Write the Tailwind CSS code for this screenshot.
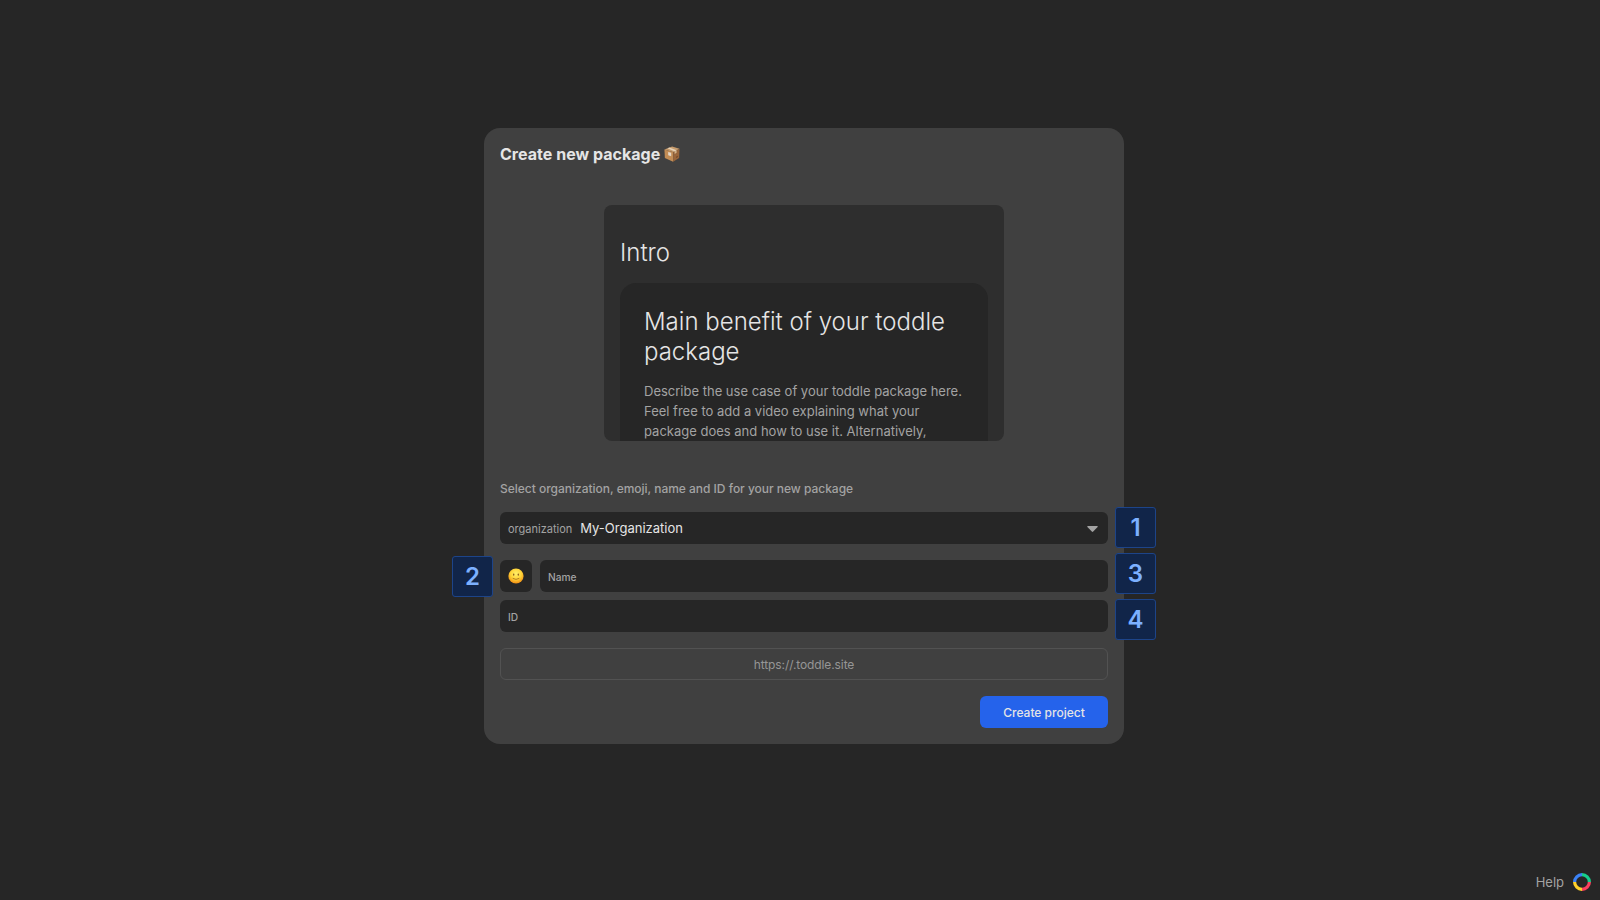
<!DOCTYPE html>
<html lang="en">
<head>
<meta charset="utf-8">
<title>Create new package</title>
<script src="https://cdn.jsdelivr.net/npm/@tailwindcss/browser@4"></script>
</head>
<body class="relative h-[900px] w-[1600px] overflow-hidden bg-[#262626] pt-32 pl-[484px] font-['Inter',sans-serif] text-neutral-200 antialiased">
<main class="flex h-[616px] w-[640px] flex-col rounded-2xl bg-[#404040] px-4">
  <h1 class="mt-4 flex h-5 items-center gap-1 text-base font-bold tracking-[0.03px] whitespace-nowrap text-[#e5e5e5]"><span>Create new package</span>
    <svg class="mt-[-1px] size-4" viewBox="0 0 16 16">
      <path d="M.4 3.5 8.1.4l7.4 2.3-6.1 3.6z" fill="#c59a6c"/>
      <path d="M.4 3.5l9 2.8-.3 9.4L.9 11.9z" fill="#c18c55"/>
      <path d="M9.4 6.3l6.1-3.6-.4 9.3-6 3.7z" fill="#98653b"/>
      <path d="M3.5 2.3l1.8-.8 7.3 2.7-2 1.2z" fill="#e5d2b7"/>
      <path d="M10.6 5.4l2-1.2v2.6l-2 1.2z" fill="#d2b38c"/>
      <path d="M4.2 5.9l3 .9v3.5l-3-1.1z" fill="#e4d8c9"/>
      <path d="M12.2 10.7l1.5-.9v1.3l-1.5.9z" fill="#6e4325"/>
    </svg>
  </h1>
  <section class="mt-[41px] h-[236px] w-[400px] self-center overflow-hidden rounded-lg bg-[#2e2e2e] px-4 pt-[33px]">
    <h2 class="text-2xl leading-[30px] font-light text-[#e5e5e5]">Intro</h2>
    <div class="mt-[15px] h-60 rounded-t-2xl bg-[#262626] px-6 pt-6">
      <h3 class="text-2xl leading-[30px] font-light text-[#e5e5e5]">Main benefit of your toddle<br>package</h3>
      <p class="mt-[14px] text-[13px] leading-5 whitespace-nowrap text-[#a3a3a3]">Describe the use case of your toddle package here.<br>Feel free to add a video explaining what your<br>package does and how to use it. Alternatively,</p>
    </div>
  </section>
  <p class="mt-[38px] text-xs leading-5 font-medium tracking-[-0.02px] text-[#a3a3a3]">Select organization, emoji, name and ID for your new package</p>
  <div class="mt-[13px] flex h-8 items-center gap-2 rounded-md bg-[#262626] px-2">
    <span class="pt-[3px] text-[11px] text-[#a3a3a3]">organization</span>
    <span class="pt-[2px] text-[13px] text-[#e5e5e5]">My-Organization</span>
    <svg class="mt-px mr-[2.5px] ml-auto h-[6px] w-[11px]" viewBox="0 0 11 6"><path d="M.8 0h9.4q.9.2.4.9L6.2 5.6q-.7.6-1.4 0L.4.9Q0 .2.8 0z" fill="#a3a3a3"/></svg>
  </div>
  <div class="mt-4 flex h-8 gap-2">
    <div class="flex w-8 items-center justify-center rounded-md bg-[#262626]">
      <svg class="mt-[-1px] size-4" viewBox="0 0 16 16">
        <defs><radialGradient id="face" cx=".5" cy=".35" r=".65"><stop offset="0" stop-color="#fff06a"/><stop offset=".55" stop-color="#ffd337"/><stop offset="1" stop-color="#f08c13"/></radialGradient></defs>
        <circle cx="8" cy="8" r="7.6" fill="url(#face)"/>
        <ellipse cx="5.7" cy="6.6" rx=".65" ry="1.2" fill="#8a5a1c"/><ellipse cx="10.3" cy="6.6" rx=".65" ry="1.2" fill="#8a5a1c"/>
        <path d="M5 10.5q3 2 6 0" fill="none" stroke="#9c651c" stroke-width=".75" stroke-linecap="round"/>
      </svg>
    </div>
    <div class="flex flex-1 items-center rounded-md bg-[#262626] px-2 pt-[3px] text-[10.2px] font-medium text-[#a3a3a3]">Name</div>
  </div>
  <div class="mt-2 flex h-8 items-center rounded-md bg-[#262626] px-2 pt-[3px] text-[10.2px] font-medium text-[#a3a3a3]">ID</div>
  <div class="mt-4 flex h-8 items-center justify-center rounded-md border border-[#525252] pt-[2px] text-xs tracking-[-0.1px] text-[#969696]">https://.toddle.site</div>
  <button class="mt-4 h-8 w-32 self-end rounded-md bg-[#2563eb] pt-[2px] text-xs font-medium text-[#e5e5e5]">Create project</button>
</main>

<div class="absolute top-[507px] left-[1115px] flex size-[41px] items-center justify-center rounded-[3px] border border-[#1d4489] bg-[#112549] text-2xl font-semibold text-[#7cb0ff]">1</div>
<div class="absolute top-[556px] left-[452px] flex size-[41px] items-center justify-center rounded-[3px] border border-[#1d4489] bg-[#112549] text-2xl font-semibold text-[#7cb0ff]">2</div>
<div class="absolute top-[553px] left-[1115px] flex size-[41px] items-center justify-center rounded-[3px] border border-[#1d4489] bg-[#112549] text-2xl font-semibold text-[#7cb0ff]">3</div>
<div class="absolute top-[599px] left-[1115px] flex size-[41px] items-center justify-center rounded-[3px] border border-[#1d4489] bg-[#112549] text-2xl font-semibold text-[#7cb0ff]">4</div>

<div class="absolute right-[9px] bottom-[9px] flex items-center gap-[9px] text-[13px] leading-[18px] text-[#a3a3a3]">
  <span>Help</span>
  <svg class="size-[18px]" viewBox="0 0 18 18" fill="none" stroke-width="3.2">
    <path d="M1.6 9A7.4 7.4 0 0 1 9 1.6" stroke="#3b82f6"/>
    <path d="M9 1.6A7.4 7.4 0 0 1 16.4 9" stroke="#16cf8c"/>
    <path d="M16.4 9A7.4 7.4 0 0 1 9 16.4" stroke="#fb3f5e"/>
    <path d="M9 16.4A7.4 7.4 0 0 1 1.6 9" stroke="#ffd02b"/>
  </svg>
</div>
</body>
</html>
